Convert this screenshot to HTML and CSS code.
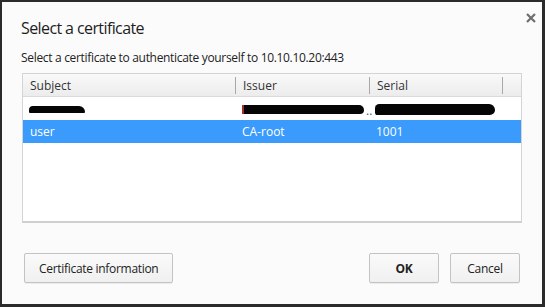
FILE: index.html
```html
<!DOCTYPE html>
<html lang="en">
	<head>
		<meta charset="UTF-8" />
		<meta name="viewport" content="width=device-width, initial-scale=1.0" />
		<link rel="stylesheet" href="styles.css">
		<title>Select a certificate</title>
	</head>
	<body>
		<div class="dialog">
			<div class="head">
				<h1 class="title">Select a certificate</h1>
				<button class="close" aria-label="Close">
					<svg width="10" height="10" viewBox="0 0 10 10">
						<path d="M1 1 L9 9 M9 1 L1 9" stroke="#6e6e6e" stroke-width="2.2" />
					</svg>
				</button>
			</div>
			<p class="msg">Select a certificate to authenticate yourself to 10.10.10.20:443</p>
			<div class="list">
				<div class="row header">
					<div class="cell c1">Subject</div>
					<div class="cell c2">Issuer</div>
					<div class="cell c3">Serial</div>
					<div class="cell c4"></div>
				</div>
				<div class="row">
					<div class="cell c1"><span class="redact r1"></span></div>
					<div class="cell c2"><span class="redact r2"></span><span class="dots">..</span></div>
					<div class="cell c3"><span class="redact r3"></span></div>
				</div>
				<div class="row selected">
					<div class="cell c1">user</div>
					<div class="cell c2">CA-root</div>
					<div class="cell c3">1001</div>
				</div>
			</div>
			<div class="actions">
				<button class="btn">Certificate information</button>
				<div class="spacer"></div>
				<button class="btn ok">OK</button>
				<button class="btn cancel">Cancel</button>
			</div>
		</div>
	</body>
</html>
```

FILE: styles.css
```css
* {
	margin: 0;
	padding: 0;
	box-sizing: border-box;
}
body {
	background-color: #2b2b2b;
	font-family: "Open Sans", "Noto Sans", sans-serif;
	color: #222;
	width: 545px;
	height: 307px;
	overflow: hidden;
}
.dialog {
	margin: 2px 0 0 2px;
	width: 540px;
	height: 302px;
	background-color: #fbfbfb;
	padding: 15px 20px 21px 19px;
	display: flex;
	flex-direction: column;
}
.head {
	display: flex;
	justify-content: space-between;
	align-items: flex-start;
}
.title {
	font-size: 16px;
	font-weight: 400;
	line-height: 22px;
	color: #1e1e1e;
	letter-spacing: -0.6px;
}
.close {
	border: none;
	background: none;
	margin-top: -4px;
	margin-right: -14px;
	width: 10px;
	height: 10px;
	display: flex;
}
.msg {
	font-size: 12px;
	line-height: 16px;
	margin-top: 11px;
	color: #222;
	letter-spacing: -0.32px;
}
.list {
	margin-top: 7px;
	margin-left: 1px;
	width: 500px;
	height: 150px;
	border: 1px solid #d4d4d4;
	border-bottom: 2px solid #cfcfcf;
	background-color: #fff;
	font-size: 12px;
}
.row {
	display: flex;
	height: 23px;
	align-items: center;
}
.header {
	background: linear-gradient(#f9f9f9, #ececec);
	border-bottom: 1px solid #dadada;
	color: #333;
}
.cell {
	padding-left: 7px;
	white-space: nowrap;
	position: relative;
}
.c1 {
	width: 212px;
}
.c2 {
	width: 134px;
}
.c3 {
	width: 133px;
}
.c4 {
	flex: 1;
}
.header .c2,
.header .c3,
.header .c4 {
	border-left: 1px solid #a8a8a8;
	height: 17px;
	line-height: 17px;
}
.header .c4 {
	padding: 0;
}
.redact {
	display: inline-block;
	background-color: #050505;
	vertical-align: middle;
}
.r1 {
	width: 56px;
	height: 7px;
	border-radius: 4px 6px 1px 1px;
	margin-left: -1px;
}
.r2 {
	width: 122px;
	height: 9px;
	border-left: 2px solid #a0342a;
	border-radius: 0 5px 4px 0;
}
.dots {
	color: #555;
	margin-left: 2px;
	position: relative;
	top: 2px;
}
.r3 {
	width: 120px;
	height: 11px;
	border-radius: 5px 7px 6px 3px;
	margin-left: -1px;
}
.selected {
	background-color: #3a9bfd;
	color: #fff;
}
.actions {
	margin-top: auto;
	display: flex;
	padding: 0 2px 0 3px;
	gap: 11px;
}
.spacer {
	flex: 1;
}
.btn {
	font-family: "Open Sans", "Noto Sans", sans-serif;
	font-size: 12px;
	color: #222;
	height: 30px;
	border: 1px solid #c3c3c3;
	border-radius: 2px;
	background: linear-gradient(#fafafa, #f0f0f0);
	box-shadow: 0 1px 0 rgba(0, 0, 0, 0.06);
	padding: 0 14px;
	letter-spacing: -0.3px;
}
.ok {
	width: 70px;
	font-weight: 700;
}
.cancel {
	width: 70px;
}
```
